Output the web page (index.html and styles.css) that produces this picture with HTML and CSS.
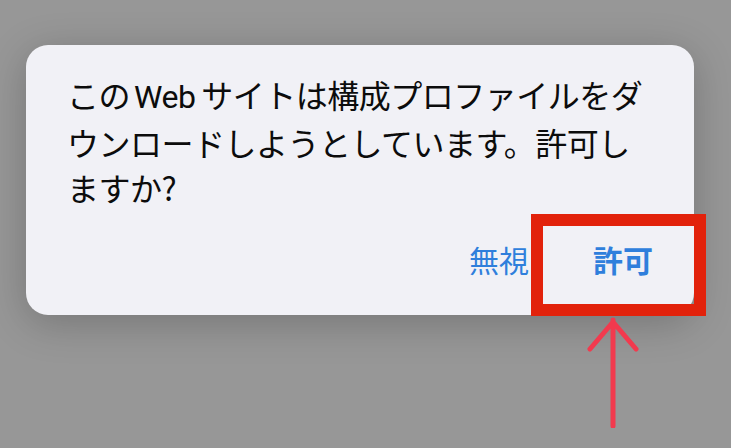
FILE: index.html
```html
<!DOCTYPE html>
<html lang="ja">
<head>
  <meta charset="UTF-8">
  <meta name="viewport" content="width=device-width, initial-scale=1.0">
  <title>構成プロファイルのダウンロード</title>
  <link rel="stylesheet" href="styles.css">
</head>
<body>
  <div class="alert">
    <p class="alert-text">この<span class="latin">Web</span>サイトは構成プロファイルをダ<br>ウンロードしようとしています。許可し<br>ますか?</p>
    <div class="alert-actions">
      <button class="btn">無視</button>
      <button class="btn btn-main">許可</button>
    </div>
    <!-- annotation: red frame + arrow -->
    <div class="mark"></div>
    <svg class="arrow" width="60" height="112" viewBox="0 0 60 112">
      <path d="M30 4 L30 110 M7 33 L30 6 L53 33" fill="none" stroke="#f23a4e" stroke-width="5" stroke-linecap="round" stroke-linejoin="miter"/>
    </svg>
  </div>
</body>
</html>
```

FILE: styles.css
```css
/* ====== Base ====== */
body{margin:0;background:#979797;font-family:"Noto Sans CJK JP","Noto Sans",sans-serif;height:448px;overflow:hidden}

/* ====== Alert card ====== */
.alert{position:relative;margin:45px 0 0 26px;width:668px;height:270px;box-sizing:border-box;background:#f1f1f6;border-radius:22px;box-shadow:0 8px 40px rgba(0,0,0,.22);padding:27px 20px 0 41px}
.alert-text{margin:0;font-size:32px;line-height:45px;color:#0c0c0c;letter-spacing:-.5px}
.alert-text .latin{font-family:Roboto,"Noto Sans",sans-serif;margin:0 6px 0 4px;letter-spacing:-.5px}

.alert-actions{display:flex;justify-content:flex-end;gap:64px;margin-top:27px;padding-right:21px}
.btn{background:none;border:none;padding:0;font-family:inherit;font-size:30px;line-height:44px;color:#2f7fdc;cursor:pointer}
.btn-main{font-weight:700}

/* ====== Annotation ====== */
.mark{position:absolute;left:505px;top:169px;width:175px;height:102px;box-sizing:border-box;border:12px solid #e2220b}
.arrow{position:absolute;left:557px;top:271px}
```
